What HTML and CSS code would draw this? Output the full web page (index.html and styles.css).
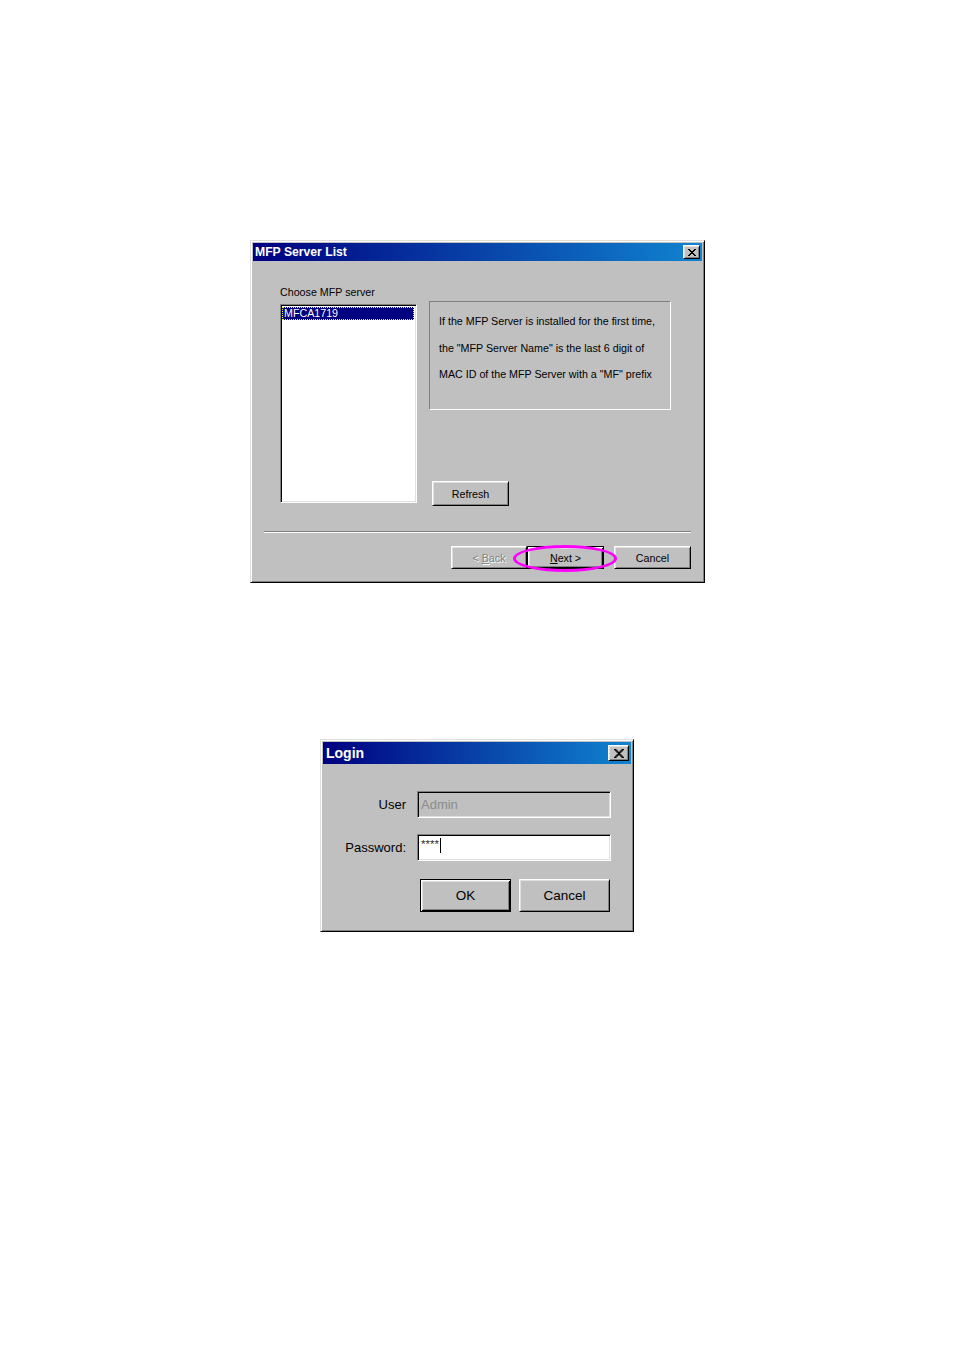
FILE: index.html
```html
<!DOCTYPE html>
<html>
<head>
<meta charset="utf-8">
<title>MFP Server List</title>
<link rel="stylesheet" href="styles.css">
</head>
<body>
<div class="page">
  <div class="win d1">
    <div class="titlebar t1">
      <span class="title">MFP Server List</span>
      <span class="close c1"><svg class="x" width="8" height="7" viewBox="0 0 8 7"><path d="M0 0h2v1H0zM6 0h2v1H6zM1 1h2v1H1zM5 1h2v1H5zM2 2h4v1H2zM3 3h2v1H3zM2 4h4v1H2zM1 5h2v1H1zM5 5h2v1H5zM0 6h2v1H0zM6 6h2v1H6z" fill="#000"/></svg></span>
    </div>
    <div class="d1-body">
      <div class="d1-upper">
        <div class="d1-left">
          <div class="label">Choose MFP server</div>
          <div class="listbox"><div class="item sel">MFCA1719</div></div>
        </div>
        <div class="d1-right">
          <div class="info">
            <p>If the MFP Server is installed for the first time,</p>
            <p>the "MFP Server Name" is the last 6 digit of</p>
            <p>MAC ID of the MFP Server with a "MF" prefix</p>
          </div>
          <div class="btn refresh">Refresh</div>
        </div>
      </div>
      <div class="sep"></div>
      <div class="d1-buttons">
        <div class="btn wiz disabled"><span>&lt; <u>B</u>ack</span></div>
        <div class="btn wiz default"><span><u>N</u>ext &gt;</span></div>
        <div class="btn wiz cancel1">Cancel</div>
      </div>
    </div>
    <div class="ring"></div>
  </div>

  <div class="win d2">
    <div class="titlebar t2">
      <span class="title title2">Login</span>
      <span class="close c2"><svg class="x" width="10" height="9" viewBox="0 0 8 7" preserveAspectRatio="none"><path d="M0 0h2v1H0zM6 0h2v1H6zM1 1h2v1H1zM5 1h2v1H5zM2 2h4v1H2zM3 3h2v1H3zM2 4h4v1H2zM1 5h2v1H1zM5 5h2v1H5zM0 6h2v1H0zM6 6h2v1H6z" fill="#000"/></svg></span>
    </div>
    <div class="d2-body">
      <div class="lbl">User</div>
      <div class="field disabled-field">Admin</div>
      <div class="lbl">Password:</div>
      <div class="field pw"><span class="stars">****</span><span class="caret"></span></div>
      <div class="d2-buttons">
        <div class="btn big default">OK</div>
        <div class="btn big">Cancel</div>
      </div>
    </div>
  </div>
</div>
</body>
</html>
```

FILE: styles.css
```css
* { box-sizing: border-box; }
html, body { margin: 0; padding: 0; background: #fff; }
body { font-family: "Liberation Sans", Arial, sans-serif; color: #000; }

.page { padding-top: 240px; }

.win {
  position: relative;
  background: #c0c0c0;
  border: 1px solid;
  border-color: #dfdfdf #000 #000 #dfdfdf;
  box-shadow: inset 1px 1px #fff, inset -1px -1px #808080;
  padding: 2px;
}

.titlebar {
  display: flex;
  align-items: center;
  justify-content: space-between;
  background: linear-gradient(to right, #000080, #1084d0);
  color: #fff;
}
.title { font-weight: bold; white-space: nowrap; }

.close {
  display: flex;
  align-items: center;
  justify-content: center;
  background: #c0c0c0;
  border: 1px solid;
  border-color: #fff #000 #000 #fff;
  box-shadow: inset 1px 1px #dfdfdf, inset -1px -1px #808080;
}
.x { display: block; }

/* Dialog 1 */
.d1 { width: 455px; margin-left: 250px; font-size: 10.7px; }
.t1 { height: 18px; padding: 0 2px 0 2px; }
.t1 .title { font-size: 12.2px; }
.c1 { width: 17px; height: 14px; }

.d1-body { padding: 24px 11px 11px 11px; }
.d1-upper { display: flex; align-items: flex-start; padding-left: 16px; }
.d1-left { width: 137px; display: flex; flex-direction: column; }
.label { height: 14px; line-height: 14px; margin-bottom: 5px; white-space: nowrap; }

.listbox {
  height: 199px;
  background: #fff;
  border: 1px solid;
  border-color: #808080 #fff #fff #808080;
  box-shadow: inset 1px 1px #000, inset -1px -1px #dfdfdf;
  padding: 2px 2px 0 1px;
}
.item { height: 13px; line-height: 13px; padding-left: 2px; white-space: nowrap; }
.item.sel {
  background: #000080;
  color: #fff;
  outline: 1px dotted #ffff00;
  outline-offset: -1px;
}

.d1-right { margin-left: 12px; padding-top: 16px; display: flex; flex-direction: column; align-items: flex-start; }
.info {
  width: 242px;
  height: 109px;
  border: 1px solid;
  border-color: #808080 #fff #fff #808080;
  padding: 6px 9px;
}
.info p { margin: 0; line-height: 26.5px; white-space: nowrap; }

.btn {
  display: flex;
  align-items: center;
  justify-content: center;
  background: #c0c0c0;
  border: 1px solid;
  border-color: #fff #000 #000 #fff;
  box-shadow: inset 1px 1px #dfdfdf, inset -1px -1px #808080;
  white-space: nowrap;
}
.btn.default {
  border-color: #000;
  box-shadow: inset 1px 1px #fff, inset -1px -1px #000, inset 2px 2px #dfdfdf, inset -2px -2px #808080;
}
.btn.disabled { color: #808080; text-shadow: 1px 1px #fff; }

.refresh { width: 77px; height: 25px; margin-top: 71px; margin-left: 3px; }

.sep { margin-top: 25px; height: 2px; border-top: 1px solid #808080; border-bottom: 1px solid #fff; }

.d1-buttons { display: flex; justify-content: flex-end; margin-top: 13px; }
.wiz { width: 77px; height: 23px; }
.wiz.disabled { width: 76px; }
.cancel1 { margin-left: 10px; }

.ring {
  position: absolute;
  left: 262px;
  top: 304px;
  width: 104px;
  height: 27px;
  border: 3px solid #ff00ff;
  border-radius: 50%;
}

/* Dialog 2 */
.d2 { width: 314px; margin-left: 320px; margin-top: 156px; font-size: 13px; }
.t2 { height: 22px; padding: 0 2px 0 3px; }
.title2 { font-size: 14px; }
.c2 { width: 21px; height: 16px; }

.d2-body {
  display: grid;
  grid-template-columns: 83px 194px;
  column-gap: 11px;
  row-gap: 16px;
  padding: 27px 0 17px 0;
}
.lbl { text-align: right; align-self: center; white-space: nowrap; }
.field {
  height: 27px;
  border: 1px solid;
  border-color: #808080 #fff #fff #808080;
  box-shadow: inset 1px 1px #000, inset -1px -1px #dfdfdf;
  padding-left: 3px;
  display: flex;
  align-items: center;
}
.disabled-field { background: #c0c0c0; color: #8a8a8a; }
.pw { background: #fff; align-items: flex-start; padding-top: 3px; }
.stars { font-size: 11.5px; line-height: 12px; color: #333; }
.caret { display: block; width: 1px; height: 15px; background: #000; margin-left: 1px; }

.d2-buttons { grid-column: 2; display: flex; gap: 8px; padding-left: 3px; margin-top: 2px; }
.big { width: 91px; height: 33px; font-size: 13.5px; }
```
